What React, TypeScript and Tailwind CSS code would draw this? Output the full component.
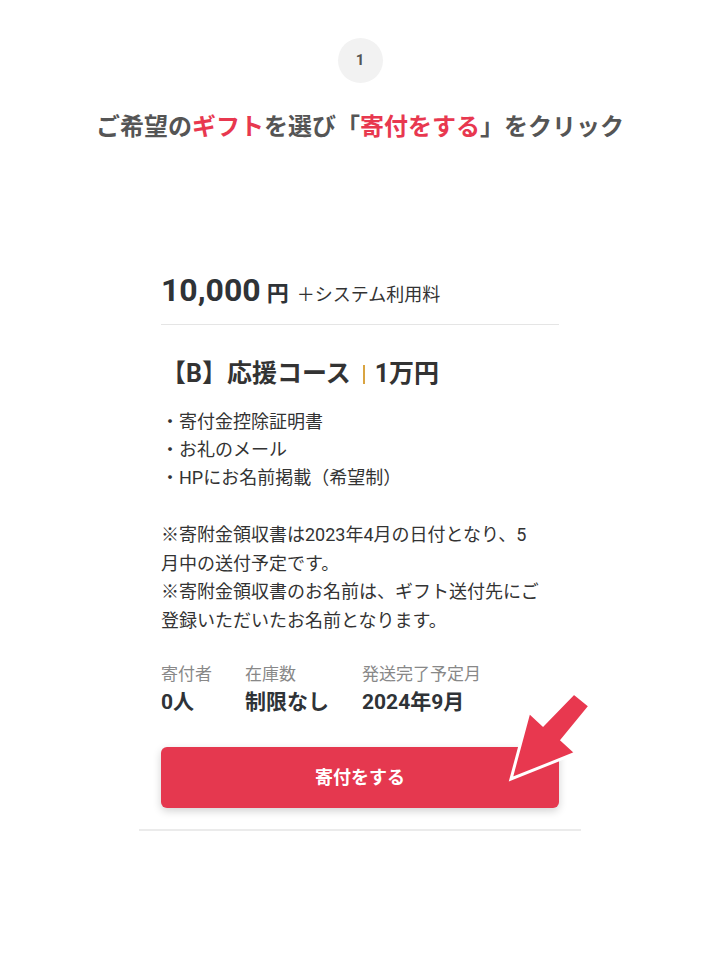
import React from 'react';

const stats = [
  { label: '寄付者', value: '0人' },
  { label: '在庫数', value: '制限なし' },
  { label: '発送完了予定月', value: '2024年9月' },
];

const gifts = ['寄付金控除証明書', 'お礼のメール', 'HPにお名前掲載（希望制）'];

const App: React.FC = () => {
  return (
    <div className="relative w-[720px] h-[960px] bg-white flex flex-col items-center font-[Roboto,'Noto_Sans_CJK_JP',sans-serif] text-[#333]">
      <div className="mt-[38px] w-[45px] h-[45px] rounded-full bg-[#f2f2f2] flex items-center justify-center text-[15px] font-bold text-[#555]">
        1
      </div>
      <h2 className="mt-[26px] text-[24px] leading-[32px] font-bold text-[#555] font-['Noto_Sans_CJK_JP',sans-serif]">
        ご希望の<span className="text-[#e8384f]">ギフト</span>を選び「
        <span className="text-[#e8384f]">寄付をする</span>」をクリック
      </h2>

      <div className="mt-[106px] w-[442px] px-[22px] pt-[24px] pb-[21px] border-b-2 border-[#ebebeb]">
        <div className="flex items-baseline pb-[11px] border-b border-[#e5e5e5] leading-[38px]">
          <span className="text-[32px] font-bold text-[#2f3337]">10,000</span>
          <span className="ml-[6px] text-[22px] font-bold text-[#2f3337]">円</span>
          <span className="ml-[8px] text-[18px] font-['Noto_Sans_CJK_JP',sans-serif]">＋システム利用料</span>
        </div>

        <div className="mt-[33px] flex items-center text-[25px] leading-[32px] font-bold">
          <span>【B】応援コース</span>
          <span className="ml-[12px] mr-[10px] w-[2px] h-[19px] bg-[#d9a441]" />
          <span>1万円</span>
        </div>

        <ul className="mt-[18px] text-[18px] leading-[28px]">
          {gifts.map((g) => (
            <li key={g}>・{g}</li>
          ))}
        </ul>

        <p className="mt-[29px] text-[18px] leading-[28.5px]">
          ※寄附金領収書は2023年4月の日付となり、5
          <br />
          月中の送付予定です。
          <br />
          ※寄附金領収書のお名前は、ギフト送付先にご
          <br />
          登録いただいたお名前となります。
        </p>

        <div className="mt-[27px] flex gap-[33px]">
          {stats.map((s) => (
            <div key={s.label} className="flex flex-col">
              <span className="text-[17px] leading-[24px] text-[#888]">{s.label}</span>
              <span className="mt-px text-[21px] leading-[30px] font-bold text-[#2f3337]">{s.value}</span>
            </div>
          ))}
        </div>

        <button className="mt-[30px] w-full h-[61px] rounded-[6px] bg-[#e5384f] text-white text-[18px] font-bold shadow-[0_3px_8px_rgba(0,0,0,0.18)]">
          寄付をする
        </button>
      </div>

      <svg className="absolute left-0 top-0 pointer-events-none" width="720" height="960" viewBox="0 0 720 960">
        <polygon
          points="574,693 590,706 562,740 576,753 511,779 529,712 543,725"
          fill="#e8384f"
          stroke="#fff"
          strokeWidth="3"
          strokeLinejoin="miter"
        />
      </svg>
    </div>
  );
};

export default App;
